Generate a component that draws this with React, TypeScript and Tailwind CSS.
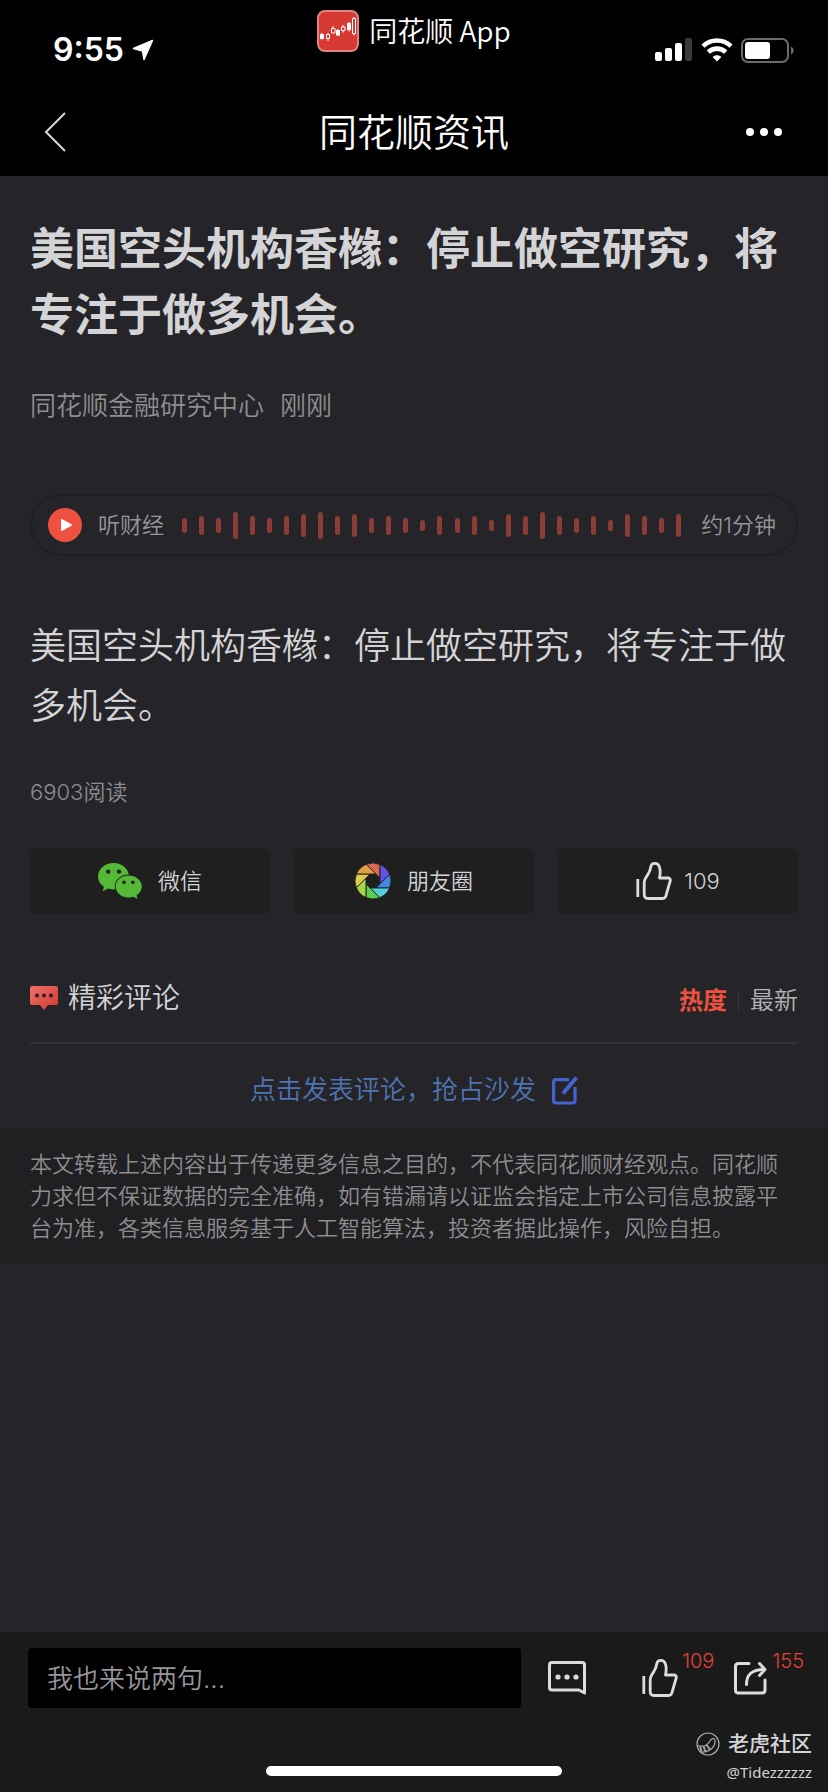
import React from "react";

const bars = [15, 19, 15, 27, 19, 15, 19, 23, 27, 19, 23, 15, 19, 15, 11, 19, 15, 19, 11, 23, 19, 27, 19, 15, 19, 11, 23, 19, 15, 23];

const blades = ["#d96a4f", "#6152e0", "#4388e0", "#55cfd8", "#5ccf4c", "#a5d543", "#dccb4e", "#e0a044"];

function AppLogo() {
    return (
        <svg width="42" height="42" viewBox="0 0 42 42" fill="none">
            <rect x="1" y="1" width="40" height="40" rx="7" fill="#d63a33" stroke="#e08482" strokeWidth="2" />
            <g fill="#fff">
                <path d="M3 24h4v5H3zM19 20h4v5.500h-4zM30 13h4v7h-4z" />
                <path d="M4.500 23h1v6.500h-1zM20.500 19h1v7h-1zM31.500 12h1v9.500h-1z" />
            </g>
            <g stroke="#fff" strokeWidth="1">
                <path d="M9.500 24.500h3v4h-3zM11 23v1.500M11 28.500v2.500" />
                <path d="M14.500 18.500h3.500v4.500h-3.500zM16 16v2.500" />
                <path d="M24.500 17h3.500v3.500h-3.500zM26 15v2M26 20.500v2" />
                <path d="M35.500 8.500h3v15h-3zM37 7v1.500M37 23.500v2" />
            </g>
        </svg>
    );
}

function SignalIcon() {
    return (
        <svg width="38" height="24" viewBox="0 0 38 24" fill="#fff">
            <rect x="0" y="14" width="7" height="9" rx="2" />
            <rect x="10" y="10" width="7" height="13" rx="2" />
            <rect x="20" y="5" width="7" height="18" rx="2" />
            <rect x="30" y="0" width="7" height="23" rx="2" fill="#3a3a3a" />
        </svg>
    );
}

function WifiIcon() {
    return (
        <svg width="32" height="24" viewBox="0 0 32 24" fill="none" stroke="#fff" strokeWidth="4.600">
            <path d="M2 8.200C10 .6 22 .6 30 8.200" />
            <path d="M7.300 14.100C12.300 9.400 19.700 9.400 24.700 14.100" />
            <path d="M16 23.500l-4.400-4.600c2.600-2.300 6.200-2.300 8.800 0z" fill="#fff" stroke="none" />
        </svg>
    );
}

function BatteryIcon() {
    return (
        <svg width="53" height="25" viewBox="0 0 53 25">
            <rect x="1" y="1" width="46" height="23" rx="6" fill="none" stroke="#6c6c6c" strokeWidth="2" />
            <rect x="4" y="4" width="25" height="17" rx="3" fill="#fff" />
            <path d="M50 8.500c3.500 1.500 3.500 6.500 0 8z" fill="#6c6c6c" />
        </svg>
    );
}

function WechatIcon() {
    return (
        <svg width="44" height="37" viewBox="0 0 44 37">
            <path d="M15.500 0C6.900 0 0 6 0 13.400c0 4.200 2.300 7.800 5.900 10.300L4.800 28.200l5.200-2.600c1.800.5 3.600.8 5.500.8C24.100 26.400 31 20.700 31 13.400S24.100 0 15.500 0z" fill="#55b837" />
            <path d="M30.700 12.400c-7.200 0-13.100 4.900-13.100 11s5.900 11 13.100 11c1.500 0 3-.2 4.400-.6l4.300 2.300-.9-3.900c3.400-2 5.300-5.200 5.300-8.800 0-6.100-5.900-11-13.100-11z" fill="#55b837" stroke="#1f1f20" strokeWidth="1.800" paintOrder="stroke" />
            <g fill="#1f1f20">
                <circle cx="10.200" cy="8.600" r="2.200" />
                <circle cx="21" cy="8.600" r="2.200" />
                <circle cx="26" cy="19.300" r="1.800" />
                <circle cx="34.800" cy="19.300" r="1.800" />
            </g>
        </svg>
    );
}

function MomentsIcon() {
    return (
        <svg width="36" height="36" viewBox="-18 -18 36 36">
            {blades.map((color, i) => (
                <path
                    key={color}
                    d="M7-2.900V-16.600A18 18 0 0 0-6.800-16.700z"
                    fill={color}
                    stroke="#1f1f20"
                    strokeWidth="0.900"
                    transform={`rotate(${i * 45})`}
                />
            ))}
        </svg>
    );
}

function ThumbIcon() {
    return (
        <svg width="36" height="39" viewBox="0 0 36 39" fill="none" stroke="#dcdcdc" strokeWidth="2.800" strokeLinecap="round" strokeLinejoin="round">
            <path d="M1.800 17V35" strokeLinecap="butt" />
            <path d="M8.200 21V32.500q0 4 4 4H26.500q2.600 0 3.400-2.600L34.200 19q.7-3-2.400-3H23.500C24.300 12 24.500 9 23.700 5.800 22.900 2.800 21 1.400 18.700 1.400c-2.300 0-3.600 1.200-4 3.600-.4 3.200-1.100 5-2.700 7.200L9.400 16.500Q8.200 18.400 8.200 21z" />
        </svg>
    );
}

function TigerMark() {
    return (
        <svg width="24" height="24" viewBox="0 0 24 24" fill="none" stroke="#a8a8a8">
            <circle cx="12" cy="12" r="11" strokeWidth="1.200" />
            <path d="M1.500 13.500c6 2 10-.5 12.500-4.500 1-2.500 4.500-3.500 5-1 .5 7-5 12.500-14.500 12" strokeWidth="1.200" />
            <path d="M4 14.500l1.500 5M7.500 14.500l2 5M10.500 13l3.500 4.500" strokeWidth="2" />
        </svg>
    );
}

export default function App() {
    return (
        <div className="flex min-h-screen flex-col bg-[#252529] font-['Inter','Noto_Sans_CJK_SC',sans-serif] text-[#d4d4d6]">
            <header className="bg-black text-white">
                <div className="grid h-22 grid-cols-[1fr_auto_1fr]">
                    <div className="flex items-center gap-2 pt-3 pl-[53px]">
                        <span className="text-[32px] leading-9 font-semibold">9:55</span>
                        <svg width="22" height="22" viewBox="0 0 22 22" fill="#fff" stroke="#fff" strokeWidth="1.500" strokeLinejoin="round">
                            <path d="M1.500 9.500L20.500 1.500 12 20.500 10.500 12z" />
                        </svg>
                    </div>
                    <div className="mt-[10px] flex items-start gap-[10px] self-start">
                        <AppLogo />
                        <span className="font-['Noto_Sans_CJK_SC',sans-serif] text-[28px] leading-10 font-[350]">同花顺 App</span>
                    </div>
                    <div className="flex items-center justify-end gap-2 pt-3 pr-[34px]">
                        <SignalIcon />
                        <WifiIcon />
                        <BatteryIcon />
                    </div>
                </div>
                <div className="grid h-22 grid-cols-[1fr_auto_1fr] items-center">
                    <button aria-label="返回" className="ml-11 justify-self-start">
                        <svg width="22" height="40" viewBox="0 0 22 40" fill="none" stroke="#d8d8d8" strokeWidth="2">
                            <path d="M21 1L2 20l19 19" />
                        </svg>
                    </button>
                    <h2 className="text-[38px] leading-[48px] font-[350]">同花顺资讯</h2>
                    <button aria-label="更多" className="mr-[46px] justify-self-end">
                        <svg width="36" height="8" viewBox="0 0 36 8" fill="#fff">
                            <circle cx="4" cy="4" r="4" />
                            <circle cx="18" cy="4" r="4" />
                            <circle cx="32" cy="4" r="4" />
                        </svg>
                    </button>
                </div>
            </header>

            <main className="flex-1">
                <article className="px-[30px] pt-10">
                    <h1 className="text-[44px] leading-[66px] font-bold">美国空头机构香橼：停止做空研究，将专注于做多机会。</h1>
                    <div className="mt-[42px] flex gap-4 text-[26px] leading-8 font-[350] text-[#8e8e90]">
                        <span>同花顺金融研究中心</span>
                        <span>刚刚</span>
                    </div>

                    <div className="mt-[72px] flex h-[62px] items-center rounded-full border-2 border-[#202023] px-4 text-[22px] font-[350] text-[#97979a]">
                        <button aria-label="播放">
                            <svg width="34" height="34" viewBox="0 0 34 34">
                                <circle cx="17" cy="17" r="17" fill="#ee5140" />
                                <path d="M14 12l9 5-9 5z" fill="#fff" stroke="#fff" strokeWidth="2" strokeLinejoin="round" />
                            </svg>
                        </button>
                        <span className="ml-4">听财经</span>
                        <div className="mr-5 ml-[18px] flex flex-1 items-center justify-between">
                            {bars.map((h, i) => (
                                <span key={i} className="w-[5px] rounded-full bg-[#8a3d34]" style={{ height: h }} />
                            ))}
                        </div>
                        <span className="mr-1">约1分钟</span>
                    </div>

                    <p className="mt-[60px] text-[36px] leading-[60px] font-[350]">美国空头机构香橼：停止做空研究，将专注于做多机会。</p>
                    <p className="mt-10 text-[22px] leading-8 font-[350] text-[#8e8e90]">6903阅读</p>

                    <div className="mt-10 grid grid-cols-3 gap-6 text-[22px] font-[350]">
                        <button className="flex h-[66px] items-center justify-center gap-4 rounded-lg bg-[#1f1f20]">
                            <WechatIcon />
                            <span>微信</span>
                        </button>
                        <button className="flex h-[66px] items-center justify-center gap-4 rounded-lg bg-[#1f1f20]">
                            <MomentsIcon />
                            <span>朋友圈</span>
                        </button>
                        <button className="flex h-[66px] items-center justify-center gap-3 rounded-lg bg-[#1f1f20]">
                            <ThumbIcon />
                            <span>109</span>
                        </button>
                    </div>
                </article>

                <section className="mt-14 px-[30px]">
                    <div className="flex items-center justify-between border-b-2 border-[#323236] pb-4">
                        <h3 className="flex items-center gap-[10px] text-[28px] leading-[56px] font-[350]">
                            <svg width="28" height="24" viewBox="0 0 28 24">
                                <defs>
                                    <linearGradient id="bubble" x1="0" y1="0" x2="1" y2="1">
                                        <stop offset="0" stopColor="#f2706c" />
                                        <stop offset="1" stopColor="#cf3a30" />
                                    </linearGradient>
                                </defs>
                                <path d="M2 0h24q2 0 2 2v15q0 2-2 2h-8l-4 5-4-5H2q-2 0-2-2V2q0-2 2-2z" fill="url(#bubble)" />
                                <g fill="#2a1a1a">
                                    <circle cx="7" cy="9.500" r="1.900" />
                                    <circle cx="14" cy="9.500" r="1.900" />
                                    <circle cx="21" cy="9.500" r="1.900" />
                                </g>
                            </svg>
                            精彩评论
                        </h3>
                        <div className="flex items-center pt-1.5 text-[24px] leading-8">
                            <button className="font-bold text-[#ee5140]">热度</button>
                            <span className="mx-[11px] h-5 w-px bg-[#38383c]" />
                            <button className="font-[350] text-[#b4b4b6]">最新</button>
                        </div>
                    </div>
                    <a href="#comment" className="flex items-center justify-center gap-4 pt-[30px] pb-[22px] text-[26px] leading-8 font-[350] text-[#4f74b3]">
                        <span>点击发表评论，抢占沙发</span>
                        <svg width="26" height="30" viewBox="0 0 26 30" fill="none" stroke="#4763cf" strokeWidth="3.200">
                            <path d="M17 4.600H4Q1.600 4.600 1.600 7V25.500Q1.600 28 4 28H20.500Q23 28 23 25.500V12" />
                            <path d="M11 18.500L24.500 2.500" strokeWidth="4" />
                        </svg>
                    </a>
                </section>

                <p className="bg-[#202022] px-[30px] py-5 text-[22px] leading-8 font-[350] text-[#8e8e90]">
                    本文转载上述内容出于传递更多信息之目的，不代表同花顺财经观点。同花顺力求但不保证数据的完全准确，如有错漏请以证监会指定上市公司信息披露平台为准，各类信息服务基于人工智能算法，投资者据此操作，风险自担。
                </p>
            </main>

            <footer className="relative bg-[#1a1a1a] pt-4 pb-4">
                <div className="flex items-center pr-6 pl-7">
                    <input
                        aria-label="评论"
                        placeholder="我也来说两句..."
                        className="h-[60px] min-w-0 flex-1 rounded bg-black px-[19px] text-[26px] font-[350] placeholder:text-[#97979a]"
                    />
                    <button aria-label="评论列表" className="ml-[27px]">
                        <svg width="38" height="34" viewBox="0 0 38 34" fill="none" stroke="#dcdcdc" strokeWidth="3" strokeLinejoin="round">
                            <path d="M4 1.500H34Q36.500 1.500 36.500 4V32L31 29H4Q1.500 29 1.500 26.500V4Q1.500 1.500 4 1.500z" />
                            <g fill="#dcdcdc" stroke="none">
                                <circle cx="10" cy="16" r="2.600" />
                                <circle cx="19" cy="16" r="2.600" />
                                <circle cx="28" cy="16" r="2.600" />
                            </g>
                        </svg>
                    </button>
                    <button className="ml-14 flex items-start gap-1 text-[20px] leading-5 font-[350] text-[#e0413a]">
                        <ThumbIcon />
                        <span className="-mt-2">109</span>
                    </button>
                    <button className="ml-5 flex items-start gap-1 text-[20px] leading-5 font-[350] text-[#e0413a]">
                        <svg width="34" height="38" viewBox="0 0 34 38" fill="none" stroke="#dcdcdc" strokeWidth="3" strokeLinecap="round" strokeLinejoin="round">
                            <path d="M15 4.500H4.500Q1.500 4.500 1.500 7.500V31Q1.500 34 4.500 34H28Q31 34 31 31V21" />
                            <path d="M12.500 25.500C12.500 16 17 10.500 30.500 10.500M25.500 4.500L31 10.500 25.500 16.500" />
                        </svg>
                        <span className="-mt-2">155</span>
                    </button>
                </div>
                <div className="mx-auto mt-[58px] h-[10px] w-[296px] rounded-full bg-white" />
                <div className="absolute right-4 bottom-2 flex flex-col items-end">
                    <div className="flex items-center gap-2 text-[21px] leading-8 font-medium">
                        <TigerMark />
                        老虎社区
                    </div>
                    <span className="font-['Noto_Sans',sans-serif] text-[15px] leading-6">@Tidezzzzzz</span>
                </div>
            </footer>
        </div>
    );
}
